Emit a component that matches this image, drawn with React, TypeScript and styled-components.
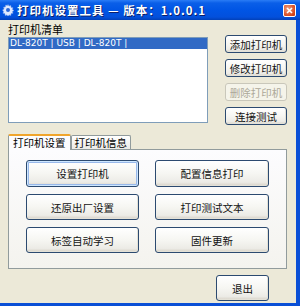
import styled, { createGlobalStyle, css } from "styled-components";

const GlobalStyle = createGlobalStyle`
  html, body {
    margin: 0;
    padding: 0;
    background: #ece9d8;
  }
  body {
    font-family: "Noto Sans CJK SC", "Noto Sans", sans-serif;
    font-size: 11px;
    color: #000;
  }
`;

const Window = styled.div`
  width: 300px;
  height: 306px;
  display: flex;
  flex-direction: column;
  background: #ece9d8;
  overflow: hidden;
`;

const TitleBar = styled.div`
  height: 20px;
  flex: none;
  display: flex;
  align-items: center;
  padding: 0 4px 0 2px;
  background: linear-gradient(
    to bottom,
    #2a7cf6 0%,
    #0a5fe8 15%,
    #0055e5 50%,
    #0350dc 85%,
    #0240b8 100%
  );
  color: #fff;
`;

const TitleIcon = styled.svg`
  width: 12px;
  height: 12px;
  flex: none;
  margin-right: 3px;
`;

const TitleText = styled.span`
  flex: 1;
  font-weight: bold;
  font-size: 11.5px;
  line-height: 20px;
  letter-spacing: 1px;
  white-space: nowrap;
  text-shadow: 1px 1px 0 #0a1e6a;
`;

const CloseButton = styled.div`
  width: 11px;
  height: 11px;
  flex: none;
  margin-top: 1px;
  border: 1px solid #fff;
  border-radius: 2px;
  background: radial-gradient(circle at 35% 35%, #f0a080, #d84a20 70%, #c03810);
  display: flex;
  align-items: center;
  justify-content: center;
`;

const Body = styled.div`
  flex: 1;
  display: flex;
  flex-direction: column;
  padding: 3px 0 0 8px;
  border-right: 4px solid #0a4fd6;
  border-bottom: 3px solid #0a4fd6;
`;

const TopRow = styled.div`
  display: flex;
`;

const ListColumn = styled.div`
  display: flex;
  flex-direction: column;
`;

const Label = styled.div`
  height: 12px;
  line-height: 12px;
  font-size: 11px;
  margin-bottom: 2px;
`;

const ListBox = styled.div`
  width: 198px;
  height: 84px;
  background: #fff;
  border: 1px solid #7f9db9;
`;

const ListRow = styled.div<{ $selected?: boolean }>`
  height: 11px;
  line-height: 11px;
  padding-left: 1px;
  font-family: "DejaVu Sans", "Liberation Sans", sans-serif;
  font-size: 9px;
  ${({ $selected }) =>
    $selected &&
    css`
      background: #316ac5;
      color: #fff;
    `}
`;

const ButtonColumn = styled.div`
  display: flex;
  flex-direction: column;
  gap: 6px;
  margin-left: 17px;
  padding-top: 12px;
`;

const XpButton = styled.button<{ $w: number; $h: number; $focus?: boolean }>`
  width: ${({ $w }) => $w}px;
  height: ${({ $h }) => $h}px;
  padding: 0;
  font-family: "Noto Sans CJK SC", sans-serif;
  font-size: 10.5px;
  color: #111;
  border: 1px solid #2c4a70;
  border-radius: 3px;
  background: linear-gradient(to bottom, #ffffff 0%, #f6f6f2 50%, #ecebe6 85%, #d6d0c5 100%);
  box-shadow: inset -1px -1px 0 #e3e1d7;
  cursor: default;
  ${({ $focus }) =>
    $focus &&
    css`
      box-shadow: inset 0 0 0 1px #cee7ff, inset 0 0 0 2px #98b8ea;
    `}

  &:disabled {
    color: #aca899;
    border-color: #c9c7ba;
    background: #f5f4ea;
    box-shadow: none;
  }
`;

const Tabs = styled.div`
  margin-top: 8px;
  display: flex;
  flex-direction: column;
`;

const TabStrip = styled.div`
  display: flex;
  align-items: flex-end;
  height: 16px;
`;

const Tab = styled.div<{ $active?: boolean }>`
  height: 13px;
  padding: 0 3px;
  line-height: 13px;
  font-size: 10.5px;
  border: 1px solid #919b9c;
  border-bottom: none;
  border-radius: 2px 2px 0 0;
  background: linear-gradient(to bottom, #ffffff, #ecebe6);
  ${({ $active }) =>
    $active &&
    css`
      height: 14px;
      line-height: 14px;
      padding: 0 4px;
      border-top: 2px solid #f0a52c;
      background: #fcfcfe;
      margin-bottom: -1px;
      position: relative;
      z-index: 1;
    `}
`;

const TabPanel = styled.div`
  box-sizing: border-box;
  width: 279px;
  height: 120px;
  border: 1px solid #919b9c;
  background: linear-gradient(to bottom, #fcfcfe, #f4f3ee);
  display: grid;
  grid-template-columns: 113px 114px;
  grid-auto-rows: min-content;
  column-gap: 16px;
  row-gap: 7px;
  padding: 10px 0 0 17px;
`;

const Footer = styled.div`
  margin-top: 6px;
  padding-left: 208px;
`;

function GearIcon() {
  return (
    <TitleIcon viewBox="0 0 12 12">
      <g fill="#dfe9ff" stroke="#7aa0e6" strokeWidth="0.5">
        <path d="M6 0.5l1 1.6 1.8-.6.3 1.9 1.9.3-.6 1.8 1.6 1-1.6 1 .6 1.8-1.9.3-.3 1.9-1.8-.6-1 1.6-1-1.6-1.8.6-.3-1.9-1.9-.3.6-1.8L.5 6l1.6-1-.6-1.8 1.9-.3.3-1.9 1.8.6z" />
      </g>
      <circle cx="6" cy="6" r="2" fill="#2a66d8" />
    </TitleIcon>
  );
}

function CloseIcon() {
  return (
    <svg width="7" height="7" viewBox="0 0 7 7">
      <path d="M1 1L6 6M6 1L1 6" stroke="#fff" strokeWidth="1.6" />
    </svg>
  );
}

export default function App() {
  return (
    <>
      <GlobalStyle />
      <Window>
        <TitleBar>
          <GearIcon />
          <TitleText>打印机设置工具 — 版本：1.0.0.1</TitleText>
          <CloseButton>
            <CloseIcon />
          </CloseButton>
        </TitleBar>
        <Body>
          <TopRow>
            <ListColumn>
              <Label>打印机清单</Label>
              <ListBox>
                <ListRow $selected>DL-820T | USB | DL-820T |</ListRow>
              </ListBox>
            </ListColumn>
            <ButtonColumn>
              <XpButton $w={62} $h={18}>添加打印机</XpButton>
              <XpButton $w={62} $h={18}>修改打印机</XpButton>
              <XpButton $w={62} $h={18} disabled>
                删除打印机
              </XpButton>
              <XpButton $w={62} $h={18}>连接测试</XpButton>
            </ButtonColumn>
          </TopRow>
          <Tabs>
            <TabStrip>
              <Tab $active>打印机设置</Tab>
              <Tab>打印机信息</Tab>
            </TabStrip>
            <TabPanel>
              <XpButton $w={113} $h={27} $focus>设置打印机</XpButton>
              <XpButton $w={114} $h={27}>配置信息打印</XpButton>
              <XpButton $w={113} $h={26}>还原出厂设置</XpButton>
              <XpButton $w={114} $h={26}>打印测试文本</XpButton>
              <XpButton $w={113} $h={26}>标签自动学习</XpButton>
              <XpButton $w={114} $h={26}>固件更新</XpButton>
            </TabPanel>
          </Tabs>
          <Footer>
            <XpButton $w={53} $h={26}>退出</XpButton>
          </Footer>
        </Body>
      </Window>
    </>
  );
}
